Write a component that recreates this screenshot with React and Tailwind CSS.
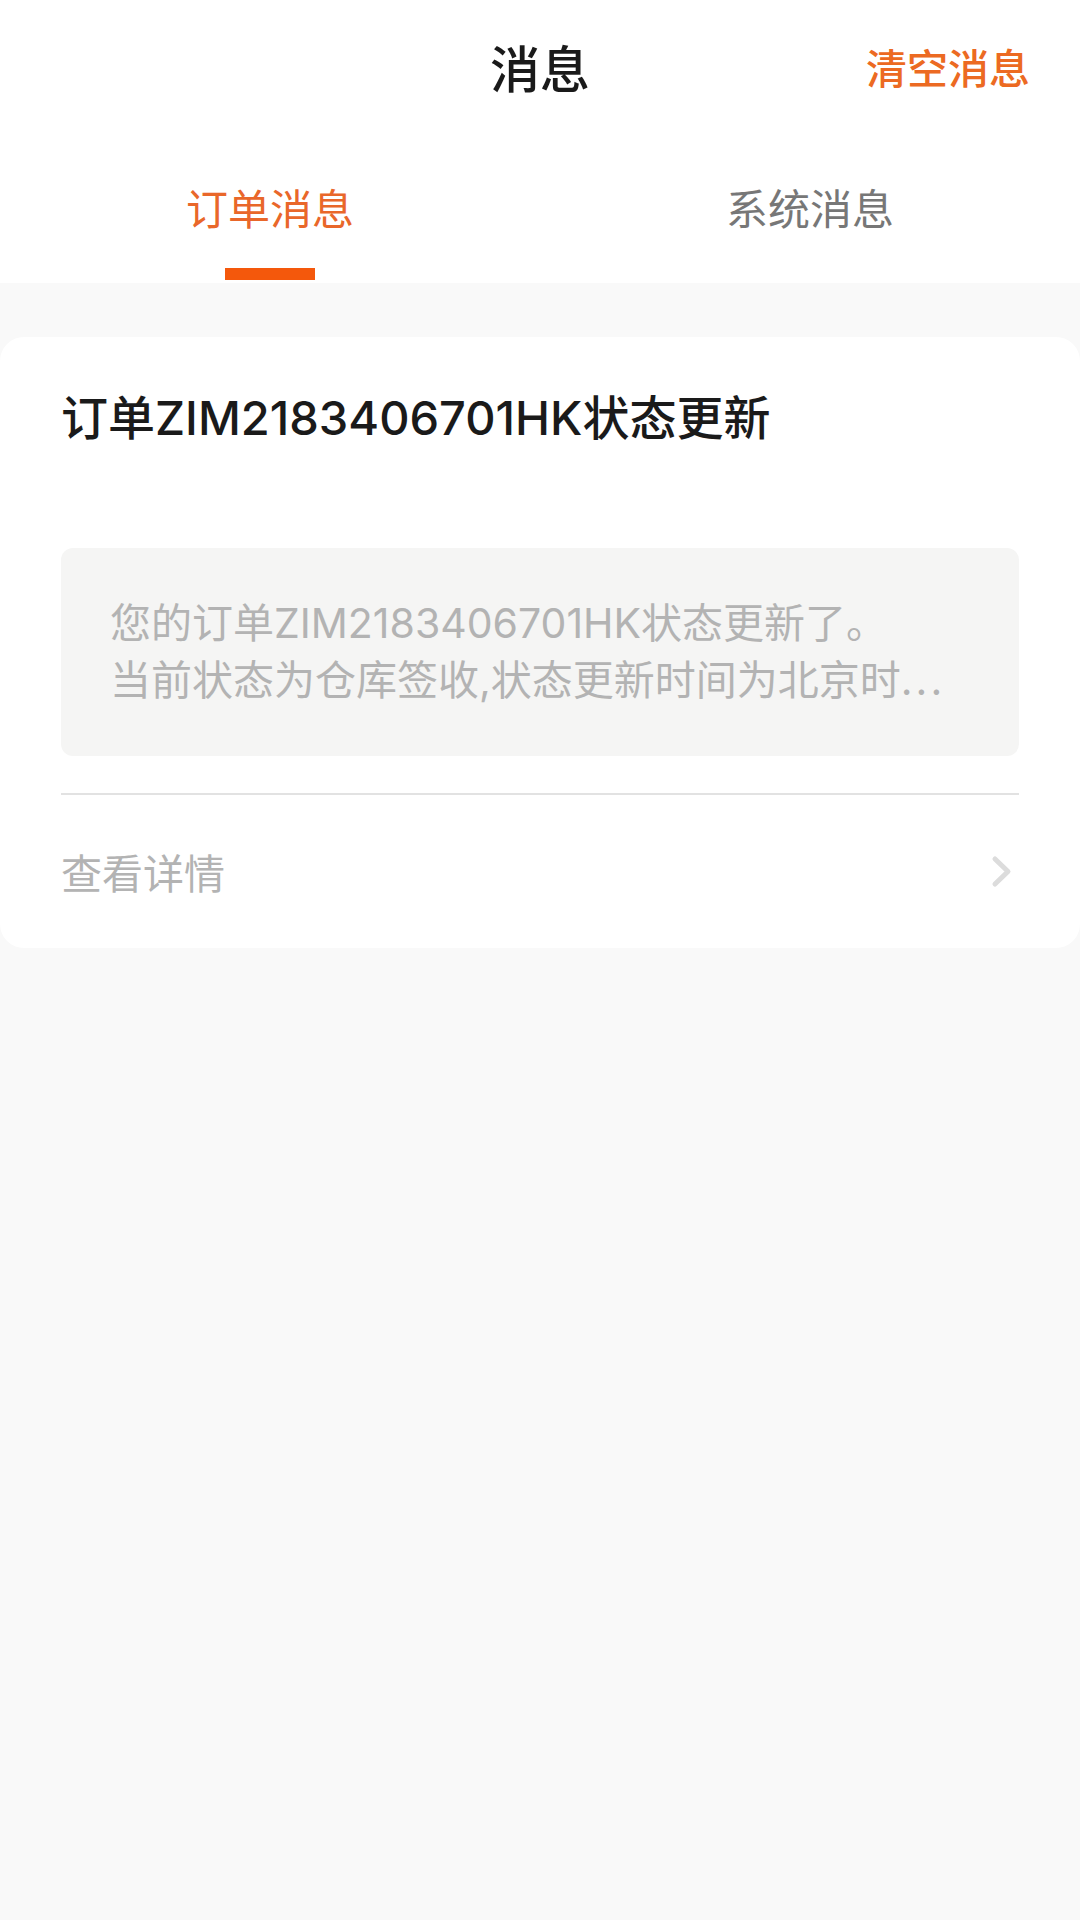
export default function App() {
  const font = { fontFamily: '"Noto Sans CJK SC", "Noto Sans", sans-serif' };
  const mixed = { fontFamily: 'Inter, "Noto Sans CJK SC", sans-serif' };
  return (
    <div className="min-h-[1920px] w-[1080px] bg-[#f9f9f9]" style={font}>
      <div className="bg-white">
        <div className="h-[132px] flex items-center px-[50px]">
          <div className="flex-1" />
          <div className="text-[50px] leading-none font-medium text-[#1a1a1a]">消息</div>
          <div className="flex-1 flex justify-end">
            <span className="text-[41px] leading-none font-medium text-[#ec6a22]">清空消息</span>
          </div>
        </div>
        <div className="flex h-[151px]">
          <div className="flex-1 flex flex-col items-center pt-[54px]">
            <span className="text-[42px] leading-none text-[#e9672a]">订单消息</span>
            <div className="mt-[40px] w-[90px] h-[12px] bg-[#f4580c]" />
          </div>
          <div className="flex-1 flex flex-col items-center pt-[54px]">
            <span className="text-[42px] leading-none text-[#777777]">系统消息</span>
          </div>
        </div>
      </div>

      <div className="mt-[54px] bg-white rounded-[24px] px-[61px] pt-[57px]">
        <div className="text-[47px] leading-none font-medium text-[#1a1a1a]" style={mixed}>
          订单ZIM2183406701HK状态更新
        </div>
        <div
          className="mt-[107px] bg-[#f5f5f4] rounded-[12px] px-[49px] py-[47px] text-[41px] leading-[57px] text-[#b3b3b3]"
          style={mixed}
        >
          <div className="whitespace-nowrap">您的订单ZIM2183406701HK状态更新了。</div>
          <div className="whitespace-nowrap">
            当前状态为仓库签收,状态更新时间为北京时<span className="tracking-[3px]">...</span>
          </div>
        </div>
        <div className="mt-[37px] h-[2px] bg-[#e2e2e2]" />
        <div className="flex items-center justify-between pt-[56px] pb-[56px]">
          <span className="text-[41px] leading-none text-[#b3b3b3]">查看详情</span>
          <svg width="22" height="33" viewBox="0 0 22 33" className="mr-[6px]">
            <polyline
              points="4,4 17,16.5 4,29"
              fill="none"
              stroke="#dcdcdc"
              strokeWidth="5"
              strokeLinecap="round"
              strokeLinejoin="round"
            />
          </svg>
        </div>
      </div>
    </div>
  );
}
